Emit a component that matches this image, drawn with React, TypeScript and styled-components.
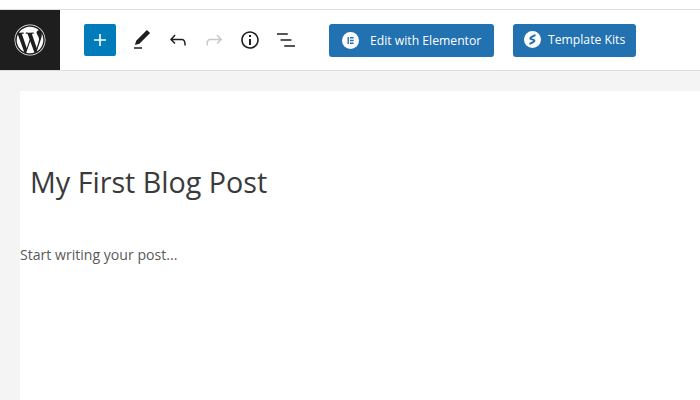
import styled, { createGlobalStyle } from "styled-components";
import { FaWordpress } from "react-icons/fa";

const GlobalStyle = createGlobalStyle`
  html, body {
    margin: 0;
    padding: 0;
    background: #fff;
    font-family: "Open Sans", "Noto Sans", sans-serif;
  }
`;

const Page = styled.div`
  width: 700px;
  height: 400px;
  overflow: hidden;
  padding-top: 9px;
  box-sizing: border-box;
  background: #fff;
  display: flex;
  flex-direction: column;
`;

const Header = styled.header`
  height: 60px;
  flex: none;
  display: flex;
  align-items: center;
  background: #fff;
  border-top: 1px solid #ddd;
  border-bottom: 1px solid #ddd;
`;

const LogoTile = styled.div`
  width: 60px;
  height: 60px;
  flex: none;
  display: flex;
  align-items: center;
  justify-content: center;
  background: #1e1e1e;
  color: #fff;
  font-size: 32px;
`;

const Toolbar = styled.div`
  display: flex;
  align-items: center;
  padding-left: 24px;
`;

const AddButton = styled.button`
  width: 32px;
  height: 32px;
  padding: 0;
  margin-right: 8px;
  border: 0;
  border-radius: 2px;
  background: #007cba;
  color: #fff;
  display: flex;
  align-items: center;
  justify-content: center;
`;

const ToolButton = styled.button<{ $disabled?: boolean }>`
  width: 36px;
  height: 36px;
  padding: 0;
  border: 0;
  background: none;
  color: ${(p) => (p.$disabled ? "#c8c8c8" : "#1e1e1e")};
  display: flex;
  align-items: center;
  justify-content: center;
`;

const ElementorButton = styled.a<{ $width: number; $pad: number; $gap: number; $left: number; $lift?: boolean }>`
  box-sizing: border-box;
  width: ${(p) => p.$width}px;
  height: 33px;
  margin-left: ${(p) => p.$left}px;
  padding-left: ${(p) => p.$pad}px;
  padding-bottom: ${(p) => (p.$lift ? 2 : 0)}px;
  display: flex;
  align-items: center;
  gap: ${(p) => p.$gap}px;
  border-radius: 3px;
  background: #2271b1;
  color: #fff;
  font-size: 12.2px;
  white-space: nowrap;
`;

const Workspace = styled.main`
  flex: 1;
  background: #f4f4f4;
  padding: 20px 0 0 20px;
  display: flex;
`;

const Canvas = styled.div`
  flex: 1;
  background: #fff;
`;

const PostTitle = styled.h1`
  margin: 0;
  padding: 72px 0 0 10px;
  font-size: 28.7px;
  line-height: 38px;
  font-weight: 400;
  color: #3a3a3a;
`;

const Placeholder = styled.p`
  margin: 0;
  padding-top: 44px;
  font-size: 14.1px;
  line-height: 20px;
  color: #5a5a5a;
`;

const Icon = ({ d, size = 24 }: { d: string; size?: number }) => (
  <svg width={size} height={size} viewBox="0 0 24 24" fill="currentColor">
    <path d={d} />
  </svg>
);

const ElementorMark = () => (
  <svg width="17" height="17" viewBox="0 0 17 17">
    <circle cx="8.5" cy="8.5" r="8.5" fill="#fff" />
    <path
      d="M5.500 5h1.400v7H5.500zM8 5h3.600v1.400H8zM8 7.800h3.600v1.400H8zM8 10.600h3.600V12H8z"
      fill="#2271b1"
    />
  </svg>
);

const KitsMark = () => (
  <svg width="17" height="17" viewBox="0 0 17 17">
    <circle cx="8.500" cy="8.500" r="8.500" fill="#fff" />
    <path
      d="M10.800 4.300 7.300 6.100C6 6.800 6 7.800 7.200 8.200l2.400.7c1.200.4 1.200 1.400 0 2l-3.400 1.800"
      fill="none"
      stroke="#2271b1"
      strokeWidth="1.900"
      strokeLinecap="round"
    />
  </svg>
);

export default function App() {
  return (
    <>
      <GlobalStyle />
      <Page>
        <Header>
          <LogoTile>
            <FaWordpress />
          </LogoTile>
          <Toolbar>
            <AddButton>
              <Icon d="M18 11.200h-5.200V6h-1.600v5.200H6v1.600h5.200V18h1.600v-5.200H18z" />
            </AddButton>
            <ToolButton>
              <Icon d="M20.100 5.100 16.900 2 6.200 12.700l-1.300 4.400 4.500-1.300L20.100 5.100zM4 20.800h8v-1.500H4v1.500z" />
            </ToolButton>
            <ToolButton>
              <Icon d="M18.300 11.700c-.6-.6-1.400-.9-2.300-.9H6.700l2.900-3.300-1.100-1-4.500 5L8.500 16l1-1-2.700-2.700H16c.5 0 .9.2 1.300.5 1 1 1 3.400 1 4.500v.3h1.500v-.2c0-1.500 0-4.300-1.500-5.700z" />
            </ToolButton>
            <ToolButton $disabled>
              <Icon d="M15.600 6.500l-1.100 1 2.900 3.300H8c-.9 0-1.700.3-2.300.9-1.400 1.500-1.400 4.200-1.400 5.600v.2h1.500v-.3c0-1.100 0-3.500 1-4.500.3-.3.7-.5 1.300-.5h9.200L14.500 15l1.100 1.100 4.600-4.600-4.600-5z" />
            </ToolButton>
            <ToolButton>
              <Icon d="M12 3.200c-4.800 0-8.800 3.900-8.800 8.800 0 4.800 3.900 8.800 8.800 8.800 4.800 0 8.800-3.900 8.800-8.800 0-4.800-4-8.800-8.800-8.800zm0 16c-4 0-7.200-3.300-7.200-7.200C4.800 8 8 4.800 12 4.800s7.200 3.300 7.200 7.200c0 4-3.200 7.200-7.200 7.200zM11 17h2v-6h-2v6zm0-8h2V7h-2v2z" />
            </ToolButton>
            <ToolButton>
              <Icon d="M13.800 5.200H3v1.500h10.800V5.200zm-3.600 12v1.500H21v-1.500H10.200zm7.200-6H6.600v1.500h10.800v-1.500z" />
            </ToolButton>
            <ElementorButton $width={165} $pad={13} $gap={11} $left={25}>
              <ElementorMark />
              Edit with Elementor
            </ElementorButton>
            <ElementorButton $width={123} $pad={11} $gap={7} $left={19} $lift>
              <KitsMark />
              Template Kits
            </ElementorButton>
          </Toolbar>
        </Header>
        <Workspace>
          <Canvas>
            <PostTitle>My First Blog Post</PostTitle>
            <Placeholder>Start writing your post...</Placeholder>
          </Canvas>
        </Workspace>
      </Page>
    </>
  );
}
